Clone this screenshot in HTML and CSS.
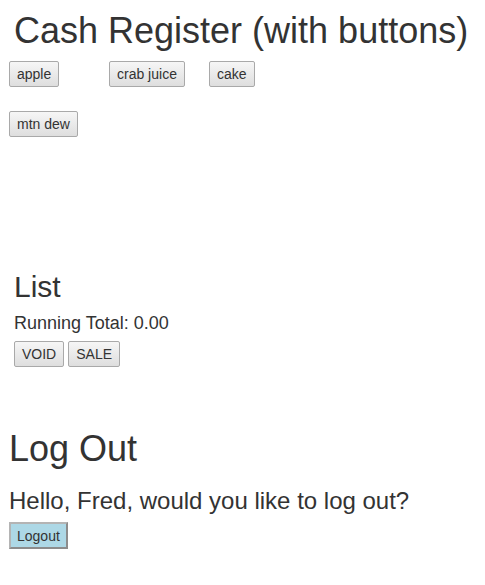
FILE: index.html
```html
<!DOCTYPE html>
<html>
<head>
<meta charset="utf-8">
<link rel="stylesheet" href="styles.css">
</head>
<body>
<div class="register">
  <h1 class="title">Cash Register (with buttons)</h1>
  <div class="items">
    <div class="cell"><button class="btn">apple</button></div>
    <div class="cell"><button class="btn">crab juice</button></div>
    <div class="cell"><button class="btn">cake</button></div>
    <div class="cell"><button class="btn">mtn dew</button></div>
  </div>
  <div class="list">
    <h2 class="list-title">List</h2>
    <div class="total">Running Total: 0.00</div>
    <div class="actions">
      <button class="btn">VOID</button>
      <button class="btn">SALE</button>
    </div>
  </div>
</div>
<div class="logout">
  <h1 class="logout-title">Log Out</h1>
  <p class="greeting">Hello, Fred, would you like to log out?</p>
  <button class="btn-logout">Logout</button>
</div>
</body>
</html>
```
FILE: styles.css
```css
html, body {
  margin: 0;
  padding: 0;
  background: #ffffff;
}
body {
  font-family: "Liberation Sans", Arial, sans-serif;
  color: #333333;
  padding: 0 8px;
}
.title {
  font-size: 36px;
  font-weight: normal;
  line-height: 40px;
  margin: 11px 0 0 0;
  padding-left: 6px;
}
.items {
  display: flex;
  flex-wrap: wrap;
  width: 300px;
  margin-top: 10px;
  padding-left: 1px;
}
.cell {
  width: 100px;
  height: 50px;
}
.btn, .btn-logout {
  font-family: "Liberation Sans", Arial, sans-serif;
  font-size: 14px;
  color: #333333;
  height: 26px;
  padding: 0 7px;
  border: 1px solid #a9a9a9;
  border-radius: 2px;
  background: linear-gradient(#f6f6f6, #dedede);
  margin: 0;
}
.list {
  padding-left: 6px;
  margin-top: 109px;
}
.list-title {
  font-size: 30px;
  font-weight: normal;
  line-height: 34px;
  margin: 0;
}
.total {
  font-size: 18px;
  line-height: 22px;
  margin-top: 8px;
}
.actions {
  display: flex;
  gap: 4px;
  margin-top: 7px;
}
.logout {
  margin-top: 62px;
  padding-left: 1px;
}
.logout-title {
  font-size: 36px;
  font-weight: normal;
  line-height: 40px;
  margin: 0;
}
.greeting {
  font-size: 24px;
  line-height: 28px;
  margin: 18px 0 0 0;
}
.btn-logout {
  margin-top: 7px;
  height: 27px;
  background: #add8e6;
  border: 2px solid;
  border-color: #b4b4b4 #8c8c8c #8c8c8c #b4b4b4;
  border-radius: 0;
  padding: 0 6px;
}
```
